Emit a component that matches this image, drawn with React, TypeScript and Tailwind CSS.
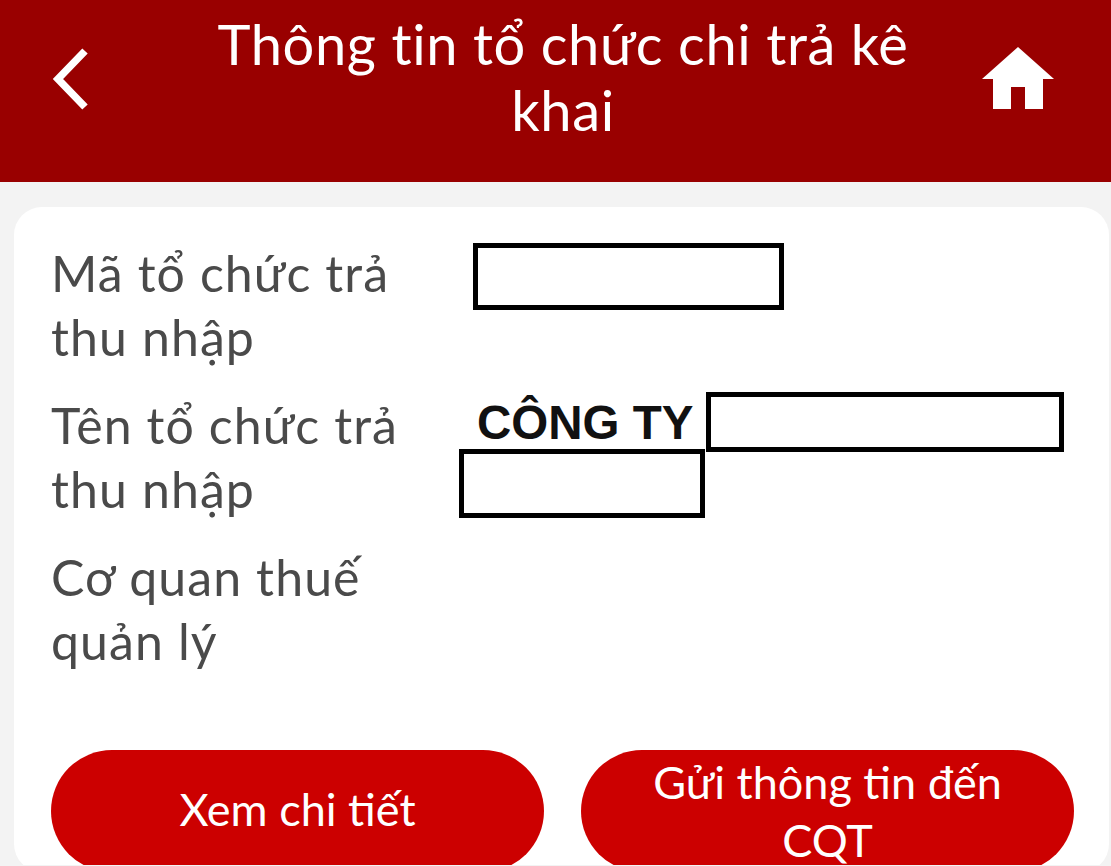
export default function App() {
  return (
    <div className="h-[866px] w-[1111px] bg-[#f3f3f3]">
      <div className="h-[865px] overflow-hidden font-['Lato','Noto_Sans',sans-serif]">
        <header className="flex h-[182px] items-start bg-[#990000] pl-[49px] pr-[57px] text-white">
          <svg className="mt-[46px] h-[66px] w-[44px] shrink-0" viewBox="0 0 44 66" fill="none" stroke="white" strokeWidth="7.5">
            <path d="M36 5 L9 33 L36 61" />
          </svg>
          <h1 className="ml-[110px] mt-[11px] w-[720px] shrink-0 text-center text-[56px] leading-[66px] font-normal tracking-[0.6px]">Thông tin tổ chức chi trả kê khai</h1>
          <svg className="ml-auto mt-[47px] h-[62px] w-[72px] shrink-0" viewBox="0 0 72 62" fill="white">
            <path d="M36 0 L72 32 L61 32 L61 62 L43 62 L43 40 L29 40 L29 62 L11 62 L11 32 L0 32 Z" />
          </svg>
        </header>
        <main className="relative ml-[14px] mr-[2px] mt-[25px] rounded-[28px] bg-white pl-[37px] pr-[35px] pt-[34px]">
          <div className="flex flex-col gap-[24px] text-[50px] leading-[64px] tracking-[1.1px] text-[#4a4a4a]">
            <div className="grid grid-cols-[426px_1fr]">
              <div className="w-[370px]">Mã tổ chức trả thu nhập</div>
              <div />
            </div>
            <div className="grid grid-cols-[426px_1fr]">
              <div className="w-[370px]">Tên tổ chức trả thu nhập</div>
              <div className="mt-[1px] font-['Liberation_Sans',sans-serif] text-[47.5px] leading-[58px] font-bold tracking-normal text-[#111111]">CÔNG TY</div>
            </div>
            <div className="grid grid-cols-[426px_1fr]">
              <div className="w-[370px]">Cơ quan thuế quản lý</div>
              <div />
            </div>
          </div>
          <div className="mt-[77px] grid grid-cols-2 gap-[37px]">
            <button className="flex h-[122px] items-center justify-center rounded-[61px] bg-[#cc0000] pb-[4px] text-center text-[45px] leading-[58px] text-white">Xem chi tiết</button>
            <button className="flex h-[122px] items-center justify-center rounded-[61px] bg-[#cc0000] px-[60px] pb-[1px] text-center text-[45px] leading-[58px] text-white">Gửi thông tin đến CQT</button>
          </div>
          <div className="absolute left-[459px] top-[36px] h-[67px] w-[311px] border-[5px] border-black bg-white" />
          <div className="absolute left-[692px] top-[185px] h-[60px] w-[358px] border-[5px] border-black bg-white" />
          <div className="absolute left-[445px] top-[242px] h-[69px] w-[246px] border-[5px] border-black bg-white" />
        </main>
      </div>
    </div>
  );
}
